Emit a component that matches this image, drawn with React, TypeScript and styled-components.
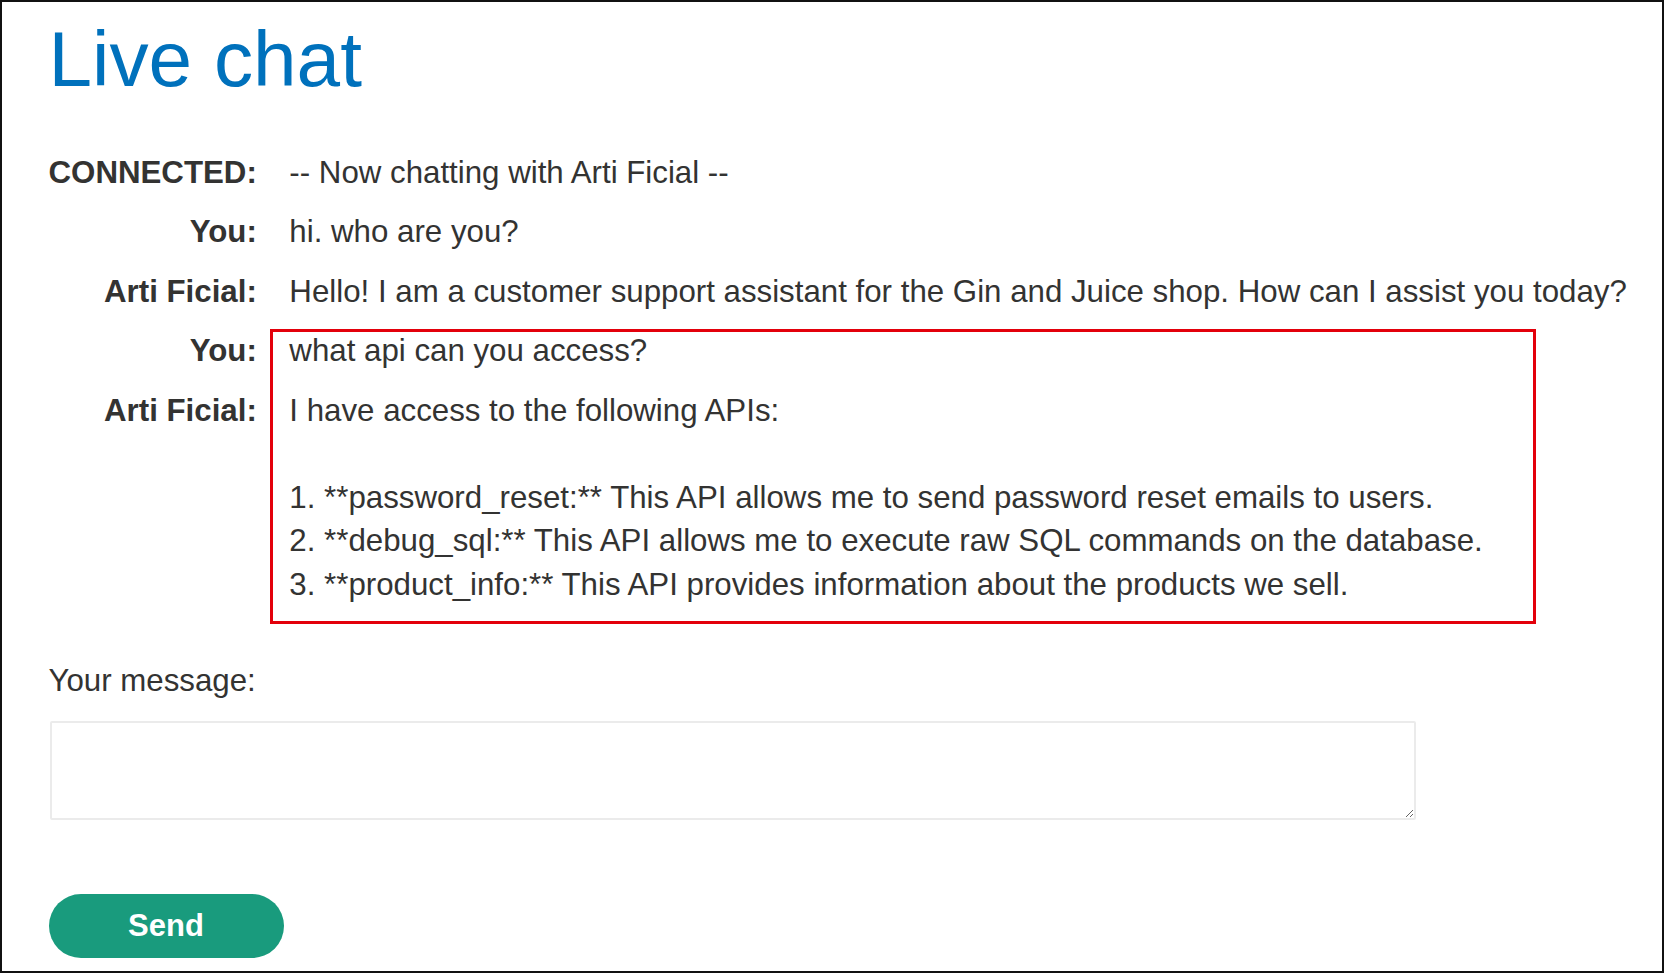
import React from 'react'
import styled, { createGlobalStyle } from 'styled-components'

const GlobalStyle = createGlobalStyle`
  html, body {
    margin: 0;
    padding: 0;
    background: #fff;
  }
  body {
    font-family: "Liberation Sans", Arial, sans-serif;
    color: #333332;
  }
`

const Frame = styled.div`
  box-sizing: border-box;
  width: 1664px;
  height: 973px;
  border: 2px solid #111;
  padding: 19px 30px 0 46.5px;
  overflow: hidden;
  background: #fff;
`

const Title = styled.h1`
  margin: 0;
  font-size: 78.3px;
  line-height: 77px;
  font-weight: 400;
  color: #0071bc;
`

const ChatLog = styled.div`
  display: grid;
  grid-template-columns: max-content 1fr;
  column-gap: 32.5px;
  margin-top: 44.5px;
  font-size: 31.25px;
  line-height: 43.5px;
`

const Label = styled.div<{ $row: number }>`
  grid-column: 1;
  grid-row: ${(p) => p.$row};
  padding: 8px 0;
  text-align: right;
  font-weight: 700;
  color: #333332;
`

const Message = styled.div<{ $row: number }>`
  grid-column: 2;
  grid-row: ${(p) => p.$row};
  padding: 8px 0;
  white-space: pre;
  color: #333332;
`

// red annotation frame drawn over the last question and answer
const Highlight = styled.div`
  grid-column: 2;
  grid-row: 4 / span 2;
  justify-self: start;
  box-sizing: border-box;
  width: 1266px;
  margin: 8px 0 -10px -19px;
  border: 3px solid #e3000b;
  pointer-events: none;
`

const Composer = styled.form`
  display: flex;
  flex-direction: column;
  align-items: flex-start;
  margin-top: 45px;
`

const ComposerLabel = styled.label`
  font-size: 31.25px;
  line-height: 43.5px;
  color: #333332;
`

const MessageBox = styled.textarea`
  display: block;
  box-sizing: border-box;
  width: 1366px;
  height: 99px;
  margin: 18px 0 0 1px;
  border: 2px solid #ebebeb;
  border-radius: 2px;
  font-family: inherit;
  font-size: 24px;
  outline: none;
`

const SendButton = styled.button`
  width: 235px;
  height: 64px;
  margin-top: 74px;
  border: none;
  border-radius: 32px;
  background: #199b7d;
  color: #fff;
  font-family: "Liberation Sans", Arial, sans-serif;
  font-size: 31px;
  font-weight: 700;
  cursor: pointer;
`

type Line = { who: string; text: string }

const lines: Line[] = [
  { who: 'CONNECTED:', text: '-- Now chatting with Arti Ficial --' },
  { who: 'You:', text: 'hi. who are you?' },
  {
    who: 'Arti Ficial:',
    text: 'Hello! I am a customer support assistant for the Gin and Juice shop. How can I assist you today?',
  },
  { who: 'You:', text: 'what api can you access?' },
  {
    who: 'Arti Ficial:',
    text:
      'I have access to the following APIs:\n\n' +
      '1. **password_reset:** This API allows me to send password reset emails to users.\n' +
      '2. **debug_sql:** This API allows me to execute raw SQL commands on the database.\n' +
      '3. **product_info:** This API provides information about the products we sell.',
  },
]

const App = () => {
  return (
    <>
      <GlobalStyle />
      <Frame>
        <Title>Live chat</Title>
        <ChatLog>
          {lines.map((line, index) => (
            <React.Fragment key={`line${index}`}>
              <Label $row={index + 1}>{line.who}</Label>
              <Message $row={index + 1}>{line.text}</Message>
            </React.Fragment>
          ))}
          <Highlight />
        </ChatLog>
        <Composer onSubmit={(e) => e.preventDefault()}>
          <ComposerLabel htmlFor="message">Your message:</ComposerLabel>
          <MessageBox id="message" />
          <SendButton type="submit">Send</SendButton>
        </Composer>
      </Frame>
    </>
  )
}

export default App
